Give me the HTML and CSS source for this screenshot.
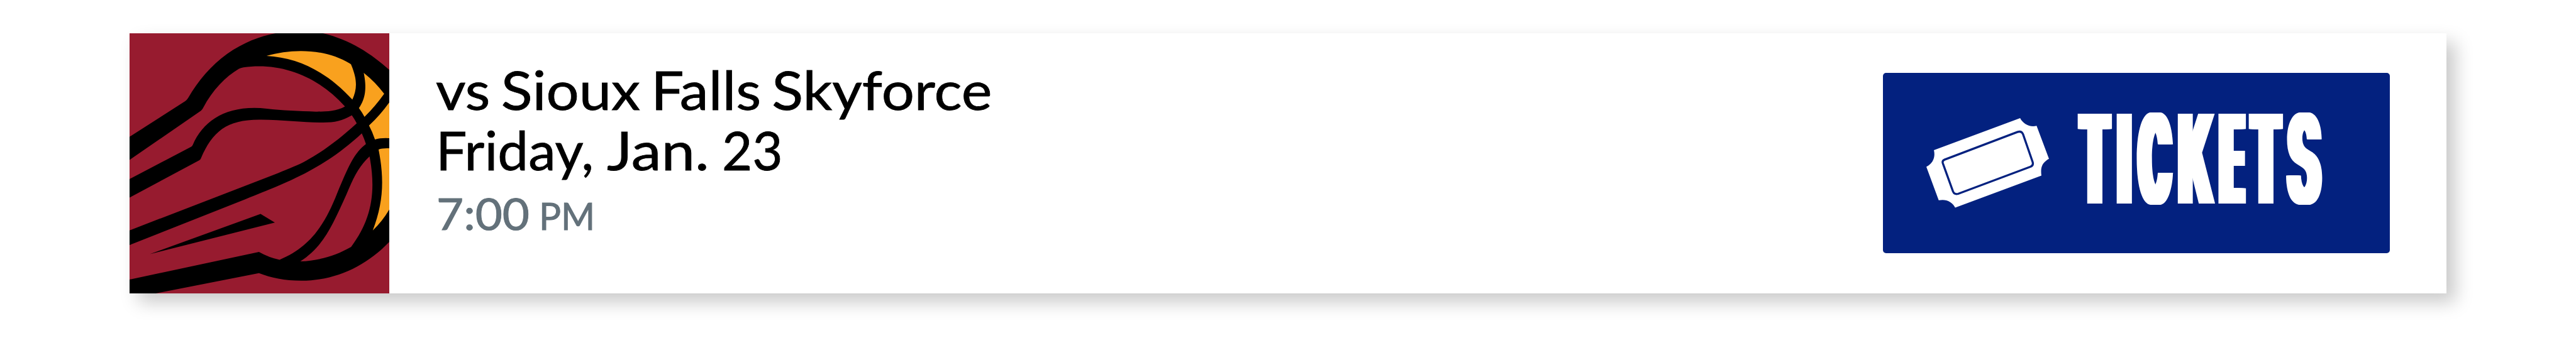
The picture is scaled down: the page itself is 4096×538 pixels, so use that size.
FILE: index.html
```html
<!DOCTYPE html>
<html lang="en">
<head>
<meta charset="utf-8">
<title>Schedule</title>
<link rel="stylesheet" href="styles.css">
</head>
<body>
<article class="game">
  <svg class="logo" viewBox="60 68 1440 1415" preserveAspectRatio="none" aria-hidden="true">
    <path class="red" d="M60 68H1500V1483H60Z"/>
    <path d="M60 631L368 437Q377 431 384 420C440 325 510 245 600 180C690 118 780 84 868 68H1130C1280 103 1400 180 1500 270V1200C1370 1335 1200 1414 1010 1414C920 1414 840 1398 776 1373L205 1483H60Z"/>
    <path class="red" d="M60 757L455 489Q463 483 467 474C520 375 590 305 665 261Q675 255 690 253C900 225 1100 300 1252 466C1200 495 1130 494 1090 494C1000 491 900 488 820 478C600 455 470 540 410 675Q407 683 400 686L60 861Z"/>
    <path class="red" d="M60 962L445 759Q452 756 455 748C520 600 600 535 790 538C900 538 1020 553 1110 553C1190 555 1230 547 1290 514Q1305 535 1317 558C1220 645 1130 713 1020 770C980 790 920 812 860 837L60 1140Z"/>
    <path class="red" d="M60 1220L700 971C850 912 900 893 1000 845C1130 782 1240 708 1345 612Q1358 640 1368 670C1300 720 1268 800 1210 935C1140 1110 1060 1230 890 1300Q830 1287 776 1257L60 1408Z"/>
    <path class="red" d="M1388 738C1425 930 1400 1080 1286 1230C1200 1278 1110 1305 1005 1309C1130 1230 1180 1120 1260 945C1300 850 1330 790 1388 738Z"/>
    <path d="M172 1269L785 1051L864 1098Z"/>
    <path class="gold" d="M818 191C960 150 1140 150 1280 233Q1287 236 1288 243C1320 320 1320 370 1293 429C1160 285 1000 200 818 191Z"/>
    <path class="gold" d="M1356 283Q1420 333 1469 397Q1420 465 1360 523Q1346 497 1329 475C1368 420 1372 360 1356 283Z"/>
    <path class="gold" d="M1500 440Q1450 510 1385 570Q1404 605 1418 646Q1450 636 1500 639Z"/>
    <path class="gold" d="M1438 700Q1460 692 1500 694V1022Q1460 1090 1406 1140C1465 990 1470 860 1438 700Z"/>
  </svg>
  <div class="info">
    <div class="title">vs Sioux Falls Skyforce</div>
    <div class="date"><span class="day">Friday,</span> <span class="month">Jan.</span> <span class="num">23</span></div>
    <div class="time"><span class="hour">7:00</span> <span class="pm">PM</span></div>
  </div>
  <a class="tickets">
    <svg class="ticket" viewBox="118 90 714 522" aria-hidden="true">
      <path class="white" d="M162 277L664 90C680 122 718 145 760 135L832 327C790 350 782 380 788 425L286 612C268 575 230 560 190 569L118 374C155 355 172 320 162 277Z"/>
      <path class="line" d="M224 332L648 171Q672 163 681 184L737 346Q743 366 723 374L303 531Q282 537 273 517L214 353Q209 338 224 332Z"/>
    </svg>
    <div class="label"><span class="t">T</span><span class="i">I</span><span class="c">C</span><span class="k">K</span><span class="e">E</span><span class="t t2">T</span><span class="s">S</span></div>
  </a>
</article>
</body>
</html>
```
FILE: styles.css
```css
body {
  margin: 0;
  height: 538px;
  overflow: hidden;
  box-sizing: border-box;
  padding: 52.7px 205.6px 71.3px;
  background: #fff;
  font-family: Lato, "Open Sans", sans-serif;
}
.game {
  display: flex;
  height: 414px;
  background: #fff;
  box-shadow: 14px 14px 27px rgba(0, 0, 0, .21);
}
.logo { width: 413.8px; height: 414px; flex: none; }
.red { fill: #971b2f; }
.gold { fill: #f9a11e; }
.info {
  flex: 1;
  padding: 41px 0 0 73.4px;
  color: #000;
  white-space: nowrap;
}
.title, .date { font-size: 85px; line-height: 96px; -webkit-text-stroke: .8px #000; }
.title { width: max-content; word-spacing: -5.8px; transform: scaleX(1.084); transform-origin: 0 0; }
.date, .time { display: flex; }
.date span, .time span { display: block; transform-origin: 0 0; }
.date .day { width: 272px; transform: scaleX(1.027); }
.date .month { width: 183.4px; transform: scaleX(1.13); }
.date .num { transform: scaleX(.98); }
.time {
  align-items: baseline;
  padding: 5.6px 0 0 1.5px;
  font-size: 69.5px;
  line-height: 96px;
  color: #63717a;
  -webkit-text-stroke: 1px #63717a;
}
.time .hour { width: 162.7px; transform: scaleX(1.07); }
.time .pm { font-size: 60.5px; transform: scaleX(.965); }
.tickets {
  display: flex;
  align-items: flex-start;
  box-sizing: border-box;
  width: 805.5px;
  height: 287.6px;
  margin: 63.2px 90.6px 0 0;
  border-radius: 5px;
  background: #03217f;
}
.ticket { width: 195px; height: 142.6px; margin: 72.5px 0 0 68.9px; flex: none; }
.white { fill: #fff; }
.line { fill: none; stroke: #03217f; stroke-width: 12; }

/* condensed heavy lettering: narrowed glyphs with horizontally thickened stems */
.label {
  display: flex;
  margin: 62.2px 0 0 44.8px;
  font: 700 197px/150px Inter, Roboto, sans-serif;
  color: #fff;
}
.label span {
  flex: none;
  transform-origin: 0 0;
  text-shadow:
    calc(var(--s) * .1) 0, calc(var(--s) * .2) 0, calc(var(--s) * .3) 0,
    calc(var(--s) * .4) 0, calc(var(--s) * .5) 0, calc(var(--s) * .6) 0,
    calc(var(--s) * .7) 0, calc(var(--s) * .8) 0, calc(var(--s) * .9) 0,
    var(--s) 0;
}
.label .t { --s: 40.6px; width: 61.7px; transform: translateX(-1.8px) scaleX(.345); }
.label .i { --s: 40.6px; width: 32.5px; transform: translateX(-3.8px) scaleX(.345); }
.label .c { --s: 40.9px; width: 64.7px; transform: translateX(-2.5px) scaleX(.34); }
.label .k { --s: 34.4px; width: 65.6px; transform: translateX(-4.1px) scaleX(.375); }
.label .e { --s: 54px; width: 47.2px; transform: translateX(-3.2px) scaleX(.29); }
.label .t2 { width: 59px; }
.label .s { --s: 30.8px; width: 59.5px; transform: translateX(-2.2px) scaleX(.4); }
```
